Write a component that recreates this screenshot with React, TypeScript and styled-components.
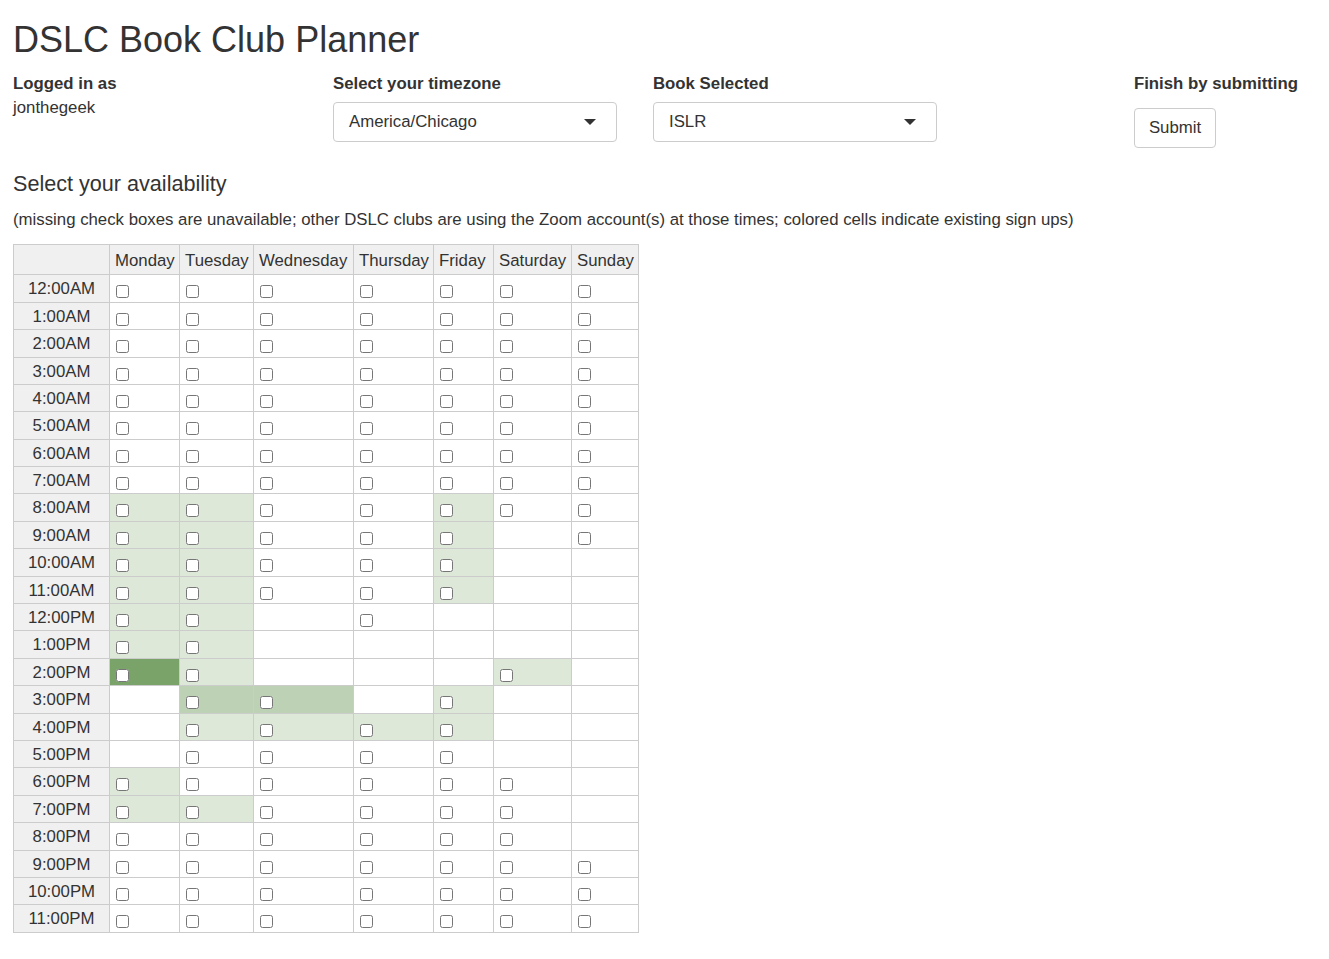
import { createGlobalStyle, styled } from 'styled-components';

const GlobalStyle = createGlobalStyle`
  body {
    margin: 0;
    background: #fff;
    color: #333;
    font-family: "Liberation Sans", Arial, sans-serif;
    font-size: 16.8px;
    line-height: 1.42857;
  }
`;

const days = ['Monday', 'Tuesday', 'Wednesday', 'Thursday', 'Friday', 'Saturday', 'Sunday'];
const colWidths = [96, 70, 74, 100, 80, 60, 78, 67];

// one string per hour, one char per day:
// . = unavailable, o = open, l = light sign ups, m = more, d = most
const slots = [
  'ooooooo',
  'ooooooo',
  'ooooooo',
  'ooooooo',
  'ooooooo',
  'ooooooo',
  'ooooooo',
  'ooooooo',
  'llooloo',
  'llool.o',
  'llool..',
  'llool..',
  'll.o...',
  'll.....',
  'dl...l.',
  '.mm.l..',
  '.llll..',
  '.oooo..',
  'looooo.',
  'lloooo.',
  'oooooo.',
  'ooooooo',
  'ooooooo',
  'ooooooo',
];

const shades: Record<string, string> = {
  l: '#dde8d9',
  m: '#bdd2b5',
  d: '#7aa36a',
};

const hourLabel = (h: number) => {
  const suffix = h < 12 ? 'AM' : 'PM';
  const hh = h % 12 === 0 ? 12 : h % 12;
  return `${hh}:00${suffix}`;
};

export default function App() {
  return (
    <Page>
      <GlobalStyle />
      <Title>DSLC Book Club Planner</Title>
      <InfoRow>
        <Field>
          <Label>Logged in as</Label>
          <Value>jonthegeek</Value>
        </Field>
        <Field>
          <Label>Select your timezone</Label>
          <Select>
            <span>America/Chicago</span>
            <Caret />
          </Select>
        </Field>
        <Field>
          <Label>Book Selected</Label>
          <Select>
            <span>ISLR</span>
            <Caret />
          </Select>
        </Field>
        <Field>
          <Label>Finish by submitting</Label>
          <SubmitButton type="button">Submit</SubmitButton>
        </Field>
      </InfoRow>

      <SectionTitle>Select your availability</SectionTitle>
      <Note>
        (missing check boxes are unavailable; other DSLC clubs are using the Zoom account(s) at those
        times; colored cells indicate existing sign ups)
      </Note>

      <Grid>
        <colgroup>
          {colWidths.map((w, i) => (
            <col key={i} style={{ width: w }} />
          ))}
        </colgroup>
        <thead>
          <tr>
            <HeadCell />
            {days.map((d) => (
              <HeadCell key={d}>{d}</HeadCell>
            ))}
          </tr>
        </thead>
        <tbody>
          {slots.map((row, h) => (
            <tr key={h}>
              <TimeCell>{hourLabel(h)}</TimeCell>
              {row.split('').map((c, i) => (
                <SlotCell key={i} $shade={shades[c]}>
                  {c !== '.' && <Check type="checkbox" />}
                </SlotCell>
              ))}
            </tr>
          ))}
        </tbody>
      </Grid>
    </Page>
  );
}

const Page = styled.div`
  padding: 0 31px 40px 13px;
`;

const Title = styled.h1`
  margin: 20px 0 10px;
  font-size: 36px;
  font-weight: 500;
  line-height: 1.1;
`;

const InfoRow = styled.div`
  display: grid;
  grid-template-columns: 320px 320px 1fr auto;
  padding-top: 4px;
`;

const Field = styled.div`
  display: flex;
  flex-direction: column;
  align-items: flex-start;
`;

const Label = styled.label`
  font-weight: 700;
  line-height: 20px;
  margin-bottom: 3px;
`;

const Value = styled.div`
  margin-top: 1px;
  line-height: 20px;
`;

const Select = styled.div`
  box-sizing: border-box;
  display: flex;
  align-items: center;
  justify-content: space-between;
  width: 284px;
  height: 40px;
  margin-top: 5px;
  padding: 0 20px 0 15px;
  border: 1px solid #ccc;
  border-radius: 4px;
  background: #fff;
`;

const Caret = styled.span`
  width: 0;
  height: 0;
  border-left: 6px solid transparent;
  border-right: 6px solid transparent;
  border-top: 6px solid #333;
`;

const SubmitButton = styled.button`
  margin-top: 11px;
  padding: 8px 14px;
  font: inherit;
  line-height: 22px;
  color: #333;
  background: #fff;
  border: 1px solid #ccc;
  border-radius: 4px;
`;

const SectionTitle = styled.h3`
  margin: 24px 0 13px;
  font-size: 21.6px;
  font-weight: 500;
  line-height: 1.1;
`;

const Note = styled.p`
  margin: 0 0 12px;
`;

const Grid = styled.table`
  border-collapse: collapse;
  table-layout: fixed;
  width: 626px;
`;

const HeadCell = styled.th`
  padding: 4px 5px 1px;
  font-weight: 400;
  text-align: left;
  line-height: 24px;
  background: #f0f0f0;
  border: 1px solid #ccc;
  white-space: nowrap;
`;

const TimeCell = styled.td`
  height: 26.4px;
  padding: 3px 5px 0;
  box-sizing: border-box;
  text-align: center;
  vertical-align: top;
  line-height: 22px;
  background: #f0f0f0;
  border: 1px solid #ccc;
`;

const SlotCell = styled.td<{ $shade?: string }>`
  height: 26.4px;
  padding: 0 5px;
  vertical-align: top;
  background: ${({ $shade }) => $shade ?? '#fff'};
  border: 1px solid #ccc;
`;

const Check = styled.input`
  display: block;
  width: 13px;
  height: 13px;
  margin: 10px 0 0 1px;
`;
